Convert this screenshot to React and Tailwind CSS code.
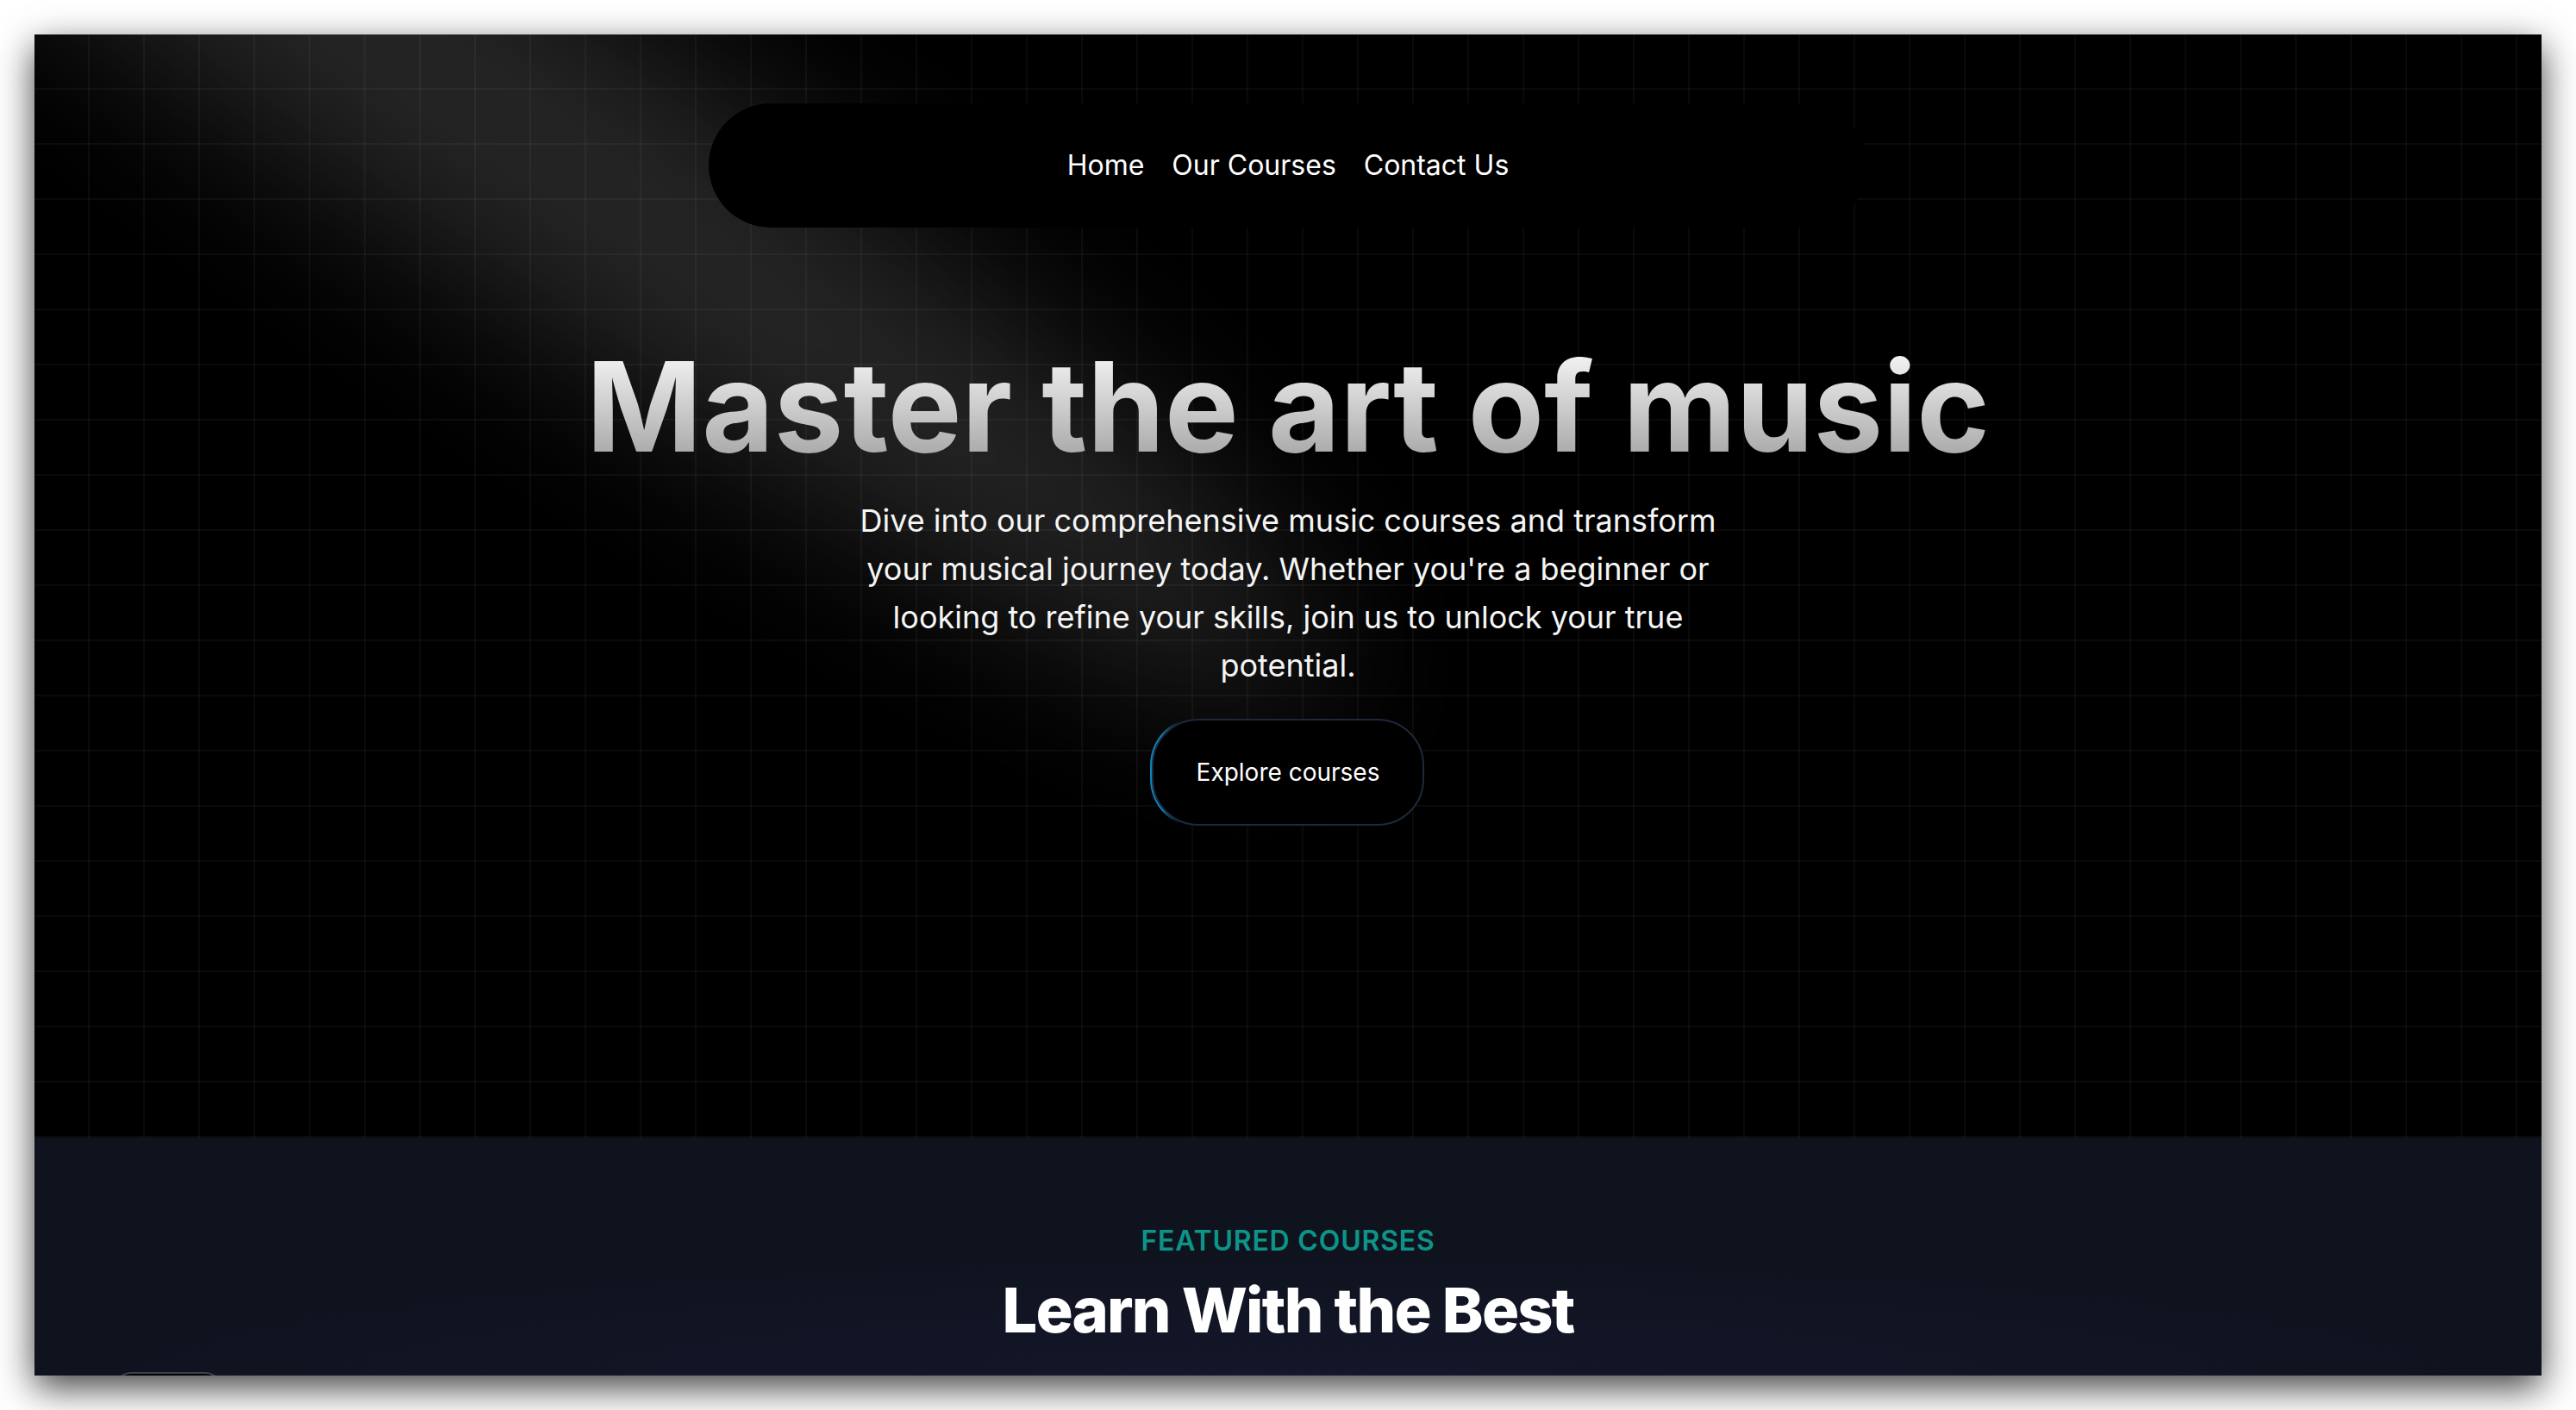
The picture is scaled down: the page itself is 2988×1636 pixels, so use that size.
import React from "react";

const links = ["Home", "Our Courses", "Contact Us"];

function Spotlight() {
  return (
    <svg
      className="pointer-events-none absolute z-[1] left-[480px] top-[-160px] h-[169%] w-[84%] -translate-x-1/2 -translate-y-[40%] opacity-70"
      xmlns="http://www.w3.org/2000/svg"
      viewBox="0 0 3787 2842"
      fill="none"
    >
      <g filter="url(#spot-blur)">
        <ellipse
          cx="1924.71"
          cy="273.501"
          rx="1924.71"
          ry="273.501"
          transform="matrix(-0.822377 -0.568943 -0.568943 0.822377 3631.88 2291.09)"
          fill="white"
          fillOpacity="0.21"
        />
      </g>
      <defs>
        <filter
          id="spot-blur"
          x="0.860352"
          y="0.838989"
          width="3785.16"
          height="2840.26"
          filterUnits="userSpaceOnUse"
          colorInterpolationFilters="sRGB"
        >
          <feFlood floodOpacity="0" result="BackgroundImageFix" />
          <feBlend mode="normal" in="SourceGraphic" in2="BackgroundImageFix" result="shape" />
          <feGaussianBlur stdDeviation="151" result="blur" />
        </filter>
      </defs>
    </svg>
  );
}

function Navbar() {
  return (
    <nav className="absolute inset-x-0 top-[80px] z-50 mx-auto w-[1344px]">
      <div className="flex justify-center gap-[32px] rounded-full bg-black px-[64px] py-[48px] text-[32px] leading-[48px] text-white">
        {links.map((l) => (
          <span key={l} className="cursor-pointer hover:opacity-90">
            {l}
          </span>
        ))}
      </div>
    </nav>
  );
}

function MovingBorderButton({ children }) {
  return (
    <button className="relative h-[128px] w-[320px] overflow-hidden rounded-[56px] bg-transparent p-[2px]">
      {/* glow blob sitting on the border */}
      <div className="absolute left-[-80px] top-[-16px] h-[160px] w-[160px] bg-[radial-gradient(#0ea5e9_40%,transparent_60%)] opacity-80" />
      <div className="relative flex h-full w-full items-center justify-center rounded-[54px] border-2 border-[#1e293b] bg-black text-[28px] text-white">
        {children}
      </div>
    </button>
  );
}

function Hero() {
  return (
    <section className="relative flex h-[1280px] w-full flex-col items-center justify-center overflow-hidden bg-black bg-[linear-gradient(to_right,transparent_62px,rgba(255,255,255,0.04)_62px),linear-gradient(to_bottom,transparent_62px,rgba(255,255,255,0.04)_62px)] bg-[size:64px_64px]">
      <Spotlight />
      <div className="relative z-10 w-full p-[32px] text-center">
        <h1 className="bg-linear-to-b from-neutral-50 to-neutral-400 bg-clip-text text-[144px] font-bold leading-none text-transparent">
          Master the art of music
        </h1>
        <p className="mx-auto mt-[32px] max-w-[1024px] text-[36px] font-normal leading-[56px] text-neutral-100">
          Dive into our comprehensive music courses and transform your musical
          journey today. Whether you're a beginner or looking to refine your
          skills, join us to unlock your true potential.
        </p>
        <div className="mt-[32px] flex justify-center">
          <MovingBorderButton>Explore courses</MovingBorderButton>
        </div>
      </div>
    </section>
  );
}

function Featured() {
  return (
    <section className="relative h-[600px] bg-[#0f131e] bg-[radial-gradient(ellipse_1500px_160px_at_50%_290px,#15172b,transparent)] py-[96px]">
      <div className="text-center">
        <h2 className="text-[32px] font-semibold uppercase leading-[48px] tracking-wide text-[#0d9488]">
          Featured Courses
        </h2>
        <p className="mt-[16px] text-[72px] font-extrabold leading-[80px] tracking-tight text-white">
          Learn With the Best
        </p>
      </div>
    </section>
  );
}

export default function App() {
  return (
    <div className="min-h-screen bg-white p-[40px] font-['Inter','Liberation_Sans',sans-serif]">
      <div className="relative h-[1556px] w-[2908px] overflow-hidden bg-black shadow-[0_14px_40px_rgba(0,0,0,0.75)]">
        <Navbar />
        <Hero />
        <Featured />
        {/* dev indicator peeking from the bottom edge */}
        <div className="absolute bottom-[-36px] left-[92px] h-[40px] w-[126px] rounded-[22px] border-2 border-[#3c4150] bg-black" />
      </div>
    </div>
  );
}
